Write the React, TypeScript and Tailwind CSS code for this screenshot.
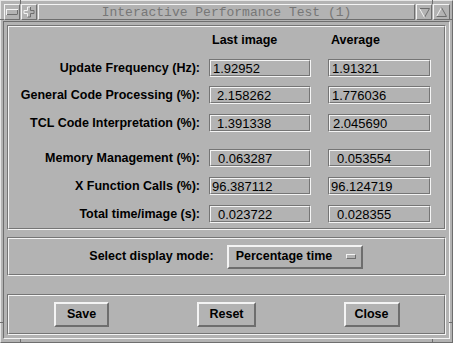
const LIGHT = 'border-[#f4f4f4]';

type Row = { label: string; last: string; avg: string; p1: string; p2: string; mt: string };

const rows: Row[] = [
  { label: 'Update Frequency (Hz):', last: '1.92952', avg: '1.91321', p1: 'pl-[2px]', p2: 'pl-[2px]', mt: 'mt-[6px]' },
  { label: 'General Code Processing (%):', last: '2.158262', avg: '1.776036', p1: 'pl-[6px]', p2: 'pl-[2px]', mt: 'mt-[9px]' },
  { label: 'TCL Code Interpretation (%):', last: '1.391338', avg: '2.045690', p1: 'pl-[6px]', p2: 'pl-[3px]', mt: 'mt-[10px]' },
  { label: 'Memory Management (%):', last: '0.063287', avg: '0.053554', p1: 'pl-[7px]', p2: 'pl-[7px]', mt: 'mt-[17px]' },
  { label: 'X Function Calls (%):', last: '96.387112', avg: '96.124719', p1: 'pl-[1px]', p2: 'pl-[1px]', mt: 'mt-[10px]' },
  { label: 'Total time/image (s):', last: '0.023722', avg: '0.028355', p1: 'pl-[7px]', p2: 'pl-[7px]', mt: 'mt-[10px]' },
];

// etched-in box: dark outer top/left, light inner
const Groove = ({ className, children }: { className?: string; children?: React.ReactNode }) => (
  <div className={'border border-t-[#757575] border-l-[#757575] border-b-[#f4f4f4] border-r-[#f4f4f4] ' + (className ?? '')}>
    <div className="h-full w-full border border-t-[#f4f4f4] border-l-[#f4f4f4] border-b-[#757575] border-r-[#757575]">
      {children}
    </div>
  </div>
);

const Field = ({ value, pad, w }: { value: string; pad: string; w: string }) => (
  <Groove className={'h-[18px] ' + w}>
    <div className={'h-full flex items-center text-[13px] text-black leading-none ' + pad}>{value}</div>
  </Groove>
);

const RaisedButton = ({ label, w }: { label: string; w: string }) => (
  <div className={'h-[25px] flex items-center justify-center border-2 border-t-[#f4f4f4] border-l-[#f4f4f4] border-b-[#6e6e6e] border-r-[#6e6e6e] text-[12.5px] font-bold text-black ' + w}>
    {label}
  </div>
);

const TitleBtn = ({ w, children }: { w: string; children: React.ReactNode }) => (
  <div className={'h-full border border-t-[#f4f4f4] border-l-[#f4f4f4] border-b-[#6e6e6e] border-r-[#6e6e6e] flex items-center justify-center ' + w}>
    {children}
  </div>
);

export default function App() {
  return (
    <div className="relative w-[453px] h-[343px] bg-[#b3b3b3] overflow-hidden font-['Liberation_Sans',Arial,sans-serif]">
      <div className={'h-full flex flex-col border border-t-[#e6e6e6] border-l-[#e6e6e6] border-b-[#6e6e6e] border-r-[#6e6e6e] pt-[3px] pl-[2px] pr-[2px] pb-[3px] ' + LIGHT}>
        {/* title bar */}
        <div className="flex h-[16px] gap-[1px] ml-[1px]">
          <TitleBtn w="w-[16px]">
            <svg width="12" height="6" viewBox="0 0 12 6">
              <rect x="0.5" y="0.5" width="11" height="5" fill="#b3b3b3" stroke="#f4f4f4" />
              <path d="M1 5.5H11.5V1" fill="none" stroke="#6e6e6e" />
            </svg>
          </TitleBtn>
          <TitleBtn w="w-[16px]">
            <svg width="12" height="12" viewBox="0 0 12 12">
              <path d="M4.5 11V7.5H1V4.5H4.5V1H7.5" fill="none" stroke="#f4f4f4" />
              <path d="M7.5 1V4.5H11V7.5H7.5V11H4.5" fill="none" stroke="#6e6e6e" />
            </svg>
          </TitleBtn>
          <div className="flex-1 h-full border border-t-[#f4f4f4] border-l-[#f4f4f4] border-b-[#6e6e6e] border-r-[#6e6e6e] flex items-center justify-center">
            <span className="font-['Liberation_Mono',monospace] text-[13px] text-[#777777] leading-none">Interactive Performance Test (1)</span>
          </div>
          <TitleBtn w="w-[16px]">
            <svg width="11" height="11" viewBox="0 0 11 11">
              <path d="M0.5 1.5H10.5L5.5 10.5" fill="none" stroke="#6e6e6e" />
              <path d="M0.5 1.5L5.5 10.5" fill="none" stroke="#f4f4f4" />
            </svg>
          </TitleBtn>
          <TitleBtn w="w-[17px]">
            <svg width="11" height="11" viewBox="0 0 11 11">
              <path d="M0.5 9.5L5.5 0.5" fill="none" stroke="#f4f4f4" />
              <path d="M5.5 0.5L10.5 9.5H0.5" fill="none" stroke="#6e6e6e" />
            </svg>
          </TitleBtn>
        </div>

        {/* client area */}
        <div className="mt-[1px] flex-1 flex flex-col border border-t-[#6e6e6e] border-l-[#6e6e6e] border-b-[#f4f4f4] border-r-[#f4f4f4] p-[3px]">
          <Groove className="h-[205px]">
            <div className="flex flex-col">
              <div className="flex h-[26px] items-center text-[12.5px] font-bold text-black">
                <div className="w-[191px]" />
                <div className="ml-[9px] w-[102px] pl-[3px]">Last image</div>
                <div className="ml-[17px] w-[103px] pl-[3px]">Average</div>
              </div>
              {rows.map((r) => (
                <div key={r.label} className={'flex items-center ' + r.mt}>
                  <div className="w-[191px] text-right text-[12.5px] font-bold text-black leading-none whitespace-nowrap">{r.label}</div>
                  <div className="ml-[9px]">
                    <Field value={r.last} pad={r.p1} w="w-[102px]" />
                  </div>
                  <div className="ml-[17px]">
                    <Field value={r.avg} pad={r.p2} w="w-[103px]" />
                  </div>
                </div>
              ))}
            </div>
          </Groove>

          <Groove className="mt-[7px] h-[39px]">
            <div className="h-full flex items-center justify-center gap-[13px] pr-[1px]">
              <span className="text-[12.5px] font-bold text-black">Select display mode:</span>
              <div className="w-[136px] h-[24px] flex items-center justify-between border-2 border-t-[#f4f4f4] border-l-[#f4f4f4] border-b-[#6e6e6e] border-r-[#6e6e6e] pl-[7px] pr-[5px]">
                <span className="text-[12.5px] font-bold text-black">Percentage time</span>
                <div className="w-[10px] h-[5px] border border-t-[#f4f4f4] border-l-[#f4f4f4] border-b-[#6e6e6e] border-r-[#6e6e6e]" />
              </div>
            </div>
          </Groove>

          <Groove className="mt-[18px] h-[41px]">
            <div className="h-full grid grid-cols-3 items-center justify-items-center">
              <RaisedButton label="Save" w="w-[55px]" />
              <RaisedButton label="Reset" w="w-[59px]" />
              <RaisedButton label="Close" w="w-[56px]" />
            </div>
          </Groove>
        </div>
      </div>

      {/* mwm resize-corner marks */}
      <div className="absolute left-[20px] top-0 w-px h-[4px] bg-[#6e6e6e]" />
      <div className="absolute left-[432px] top-0 w-px h-[4px] bg-[#6e6e6e]" />
      <div className="absolute left-0 top-[19px] w-[4px] h-px bg-[#6e6e6e]" />
      <div className="absolute right-0 top-[19px] w-[4px] h-px bg-[#6e6e6e]" />
      <div className="absolute left-0 top-[322px] w-[4px] h-px bg-[#6e6e6e]" />
      <div className="absolute right-0 top-[322px] w-[4px] h-px bg-[#6e6e6e]" />
      <div className="absolute left-[20px] bottom-0 w-px h-[4px] bg-[#6e6e6e]" />
      <div className="absolute left-[432px] bottom-0 w-px h-[4px] bg-[#6e6e6e]" />
    </div>
  );
}
